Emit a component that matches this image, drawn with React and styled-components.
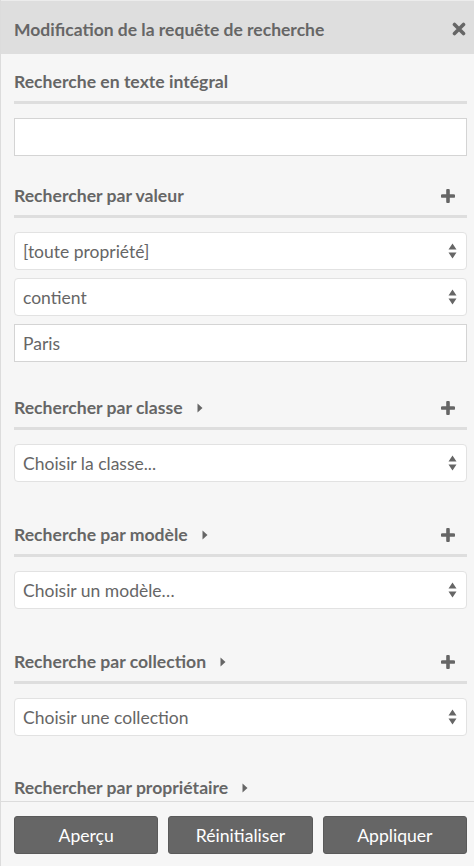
import React from "react";
import styled, { createGlobalStyle } from "styled-components";

const GlobalStyle = createGlobalStyle`
  html, body {
    margin: 0;
    padding: 0;
    background: #f6f6f6;
  }
  body {
    font-family: Lato, "Open Sans", "Liberation Sans", sans-serif;
    color: #666;
  }
`;

const CloseIcon = () => (
  <svg width="14" height="14" viewBox="0 0 14 14">
    <path
      d="M2.5 2.5 L11.5 11.5 M11.5 2.5 L2.5 11.5"
      stroke="#666"
      strokeWidth="3.6"
      strokeLinecap="round"
    />
  </svg>
);

const PlusIcon = () => (
  <svg width="14" height="14" viewBox="0 0 14 14">
    <path d="M7 1.5 V12.5 M1.5 7 H12.5" stroke="#666" strokeWidth="3.6" strokeLinecap="round" />
  </svg>
);

const CaretRight = () => (
  <svg width="6" height="10" viewBox="0 0 6 10">
    <path d="M0.5 0.5 L5.5 5 L0.5 9.5 Z" fill="#666" />
  </svg>
);

const SortArrows = () => (
  <svg width="9" height="16" viewBox="0 0 9 16">
    <path d="M4.5 0.5 L8.5 6.5 H0.5 Z M4.5 15.5 L8.5 9.5 H0.5 Z" fill="#666" />
  </svg>
);

const sections = [
  { title: "Recherche en texte intégral", fields: [{ type: "input", value: "" }], after: 23 },
  {
    title: "Rechercher par valeur",
    plus: true,
    fields: [
      { type: "select", value: "[toute propriété]" },
      { type: "select", value: "contient" },
      { type: "input", value: "Paris" },
    ],
    after: 29,
  },
  {
    title: "Rechercher par classe",
    plus: true,
    caret: true,
    fields: [{ type: "select", value: "Choisir la classe..." }],
    after: 36,
  },
  {
    title: "Recherche par modèle",
    plus: true,
    caret: true,
    fields: [{ type: "select", value: "Choisir un modèle…" }],
    after: 36,
  },
  {
    title: "Recherche par collection",
    plus: true,
    caret: true,
    fields: [{ type: "select", value: "Choisir une collection" }],
    after: 35,
  },
  { title: "Rechercher par propriétaire", caret: true, fields: [], after: 0 },
];

const App = () => (
  <>
    <GlobalStyle />
    <Dialog>
      <TitleBar>
        <DialogTitle>Modification de la requête de recherche</DialogTitle>
        <CloseButton>
          <CloseIcon />
        </CloseButton>
      </TitleBar>
      <Body>
        {sections.map((section) => (
          <Section key={section.title} after={section.after}>
            <SectionHeader>
              <SectionTitle>
                {section.title}
                {section.caret && (
                  <CaretWrap>
                    <CaretRight />
                  </CaretWrap>
                )}
              </SectionTitle>
              {section.plus && (
                <PlusButton>
                  <PlusIcon />
                </PlusButton>
              )}
            </SectionHeader>
            {section.fields.length > 0 && (
              <Fields>
                {section.fields.map((field, i) =>
                  field.type === "select" ? (
                    <SelectBox key={i}>
                      <span>{field.value}</span>
                      <SortArrows />
                    </SelectBox>
                  ) : (
                    <TextBox key={i}>{field.value}</TextBox>
                  )
                )}
              </Fields>
            )}
          </Section>
        ))}
      </Body>
      <Footer>
        <ActionButton>Aperçu</ActionButton>
        <ActionButton>Réinitialiser</ActionButton>
        <ActionButton>Appliquer</ActionButton>
      </Footer>
    </Dialog>
  </>
);

export default App;

const Dialog = styled.div`
  height: 866px;
  display: flex;
  flex-direction: column;
  background: #f6f6f6;
  border-left: 1px solid #dcdcdc;
  box-sizing: border-box;
  overflow: hidden;
`;

const TitleBar = styled.div`
  height: 54px;
  flex-shrink: 0;
  display: flex;
  align-items: center;
  justify-content: space-between;
  padding: 3px 8px 0 13px;
  background: #dedede;
  border-top: 1px solid #ececec;
  box-sizing: border-box;
`;

const DialogTitle = styled.h1`
  margin: 0;
  font-size: 17.5px;
  font-weight: bold;
  color: #666;
`;

const CloseButton = styled.span`
  display: flex;
  align-items: center;
  margin-top: -1px;
`;

const Body = styled.div`
  flex: 1;
  overflow: hidden;
  padding: 11px 7px 0 13px;
`;

const Section = styled.section`
  margin-bottom: ${({ after }) => after}px;
`;

const SectionHeader = styled.div`
  box-sizing: content-box;
  height: 33px;
  padding-bottom: 3px;
  display: flex;
  align-items: center;
  justify-content: space-between;
  border-bottom: 3px solid #dedede;
`;

const SectionTitle = styled.h2`
  margin: 0;
  display: flex;
  align-items: center;
  font-size: 17.6px;
  font-weight: bold;
  color: #666;
`;

const CaretWrap = styled.span`
  display: flex;
  margin-left: 14px;
`;

const PlusButton = styled.span`
  display: flex;
  margin-right: 12px;
`;

const Fields = styled.div`
  display: flex;
  flex-direction: column;
  gap: 8px;
  margin-top: 14px;
`;

const TextBox = styled.div`
  height: 38px;
  box-sizing: border-box;
  display: flex;
  align-items: center;
  padding: 0 8px;
  background: #fff;
  border: 1px solid #d4d4d4;
  font-size: 17.5px;
  color: #666;
`;

const SelectBox = styled.div`
  height: 38px;
  box-sizing: border-box;
  display: flex;
  align-items: center;
  justify-content: space-between;
  padding: 0 9px 0 8px;
  background: #fff;
  border: 1px solid #e2e2e2;
  border-radius: 4px;
  font-size: 17.5px;
  color: #666;
`;

const Footer = styled.div`
  height: 65px;
  flex-shrink: 0;
  box-sizing: border-box;
  display: flex;
  gap: 10px;
  padding: 14px 7px 13px 13px;
  border-top: 1px solid #dcdcdc;
  background: #f6f6f6;
`;

const ActionButton = styled.button`
  flex: 1;
  height: 38px;
  background: #666;
  color: #fff;
  border: 1px solid #5a5a5a;
  border-radius: 3px;
  font-family: Lato, "Liberation Sans", sans-serif;
  font-size: 17.6px;
  padding: 0;
`;
